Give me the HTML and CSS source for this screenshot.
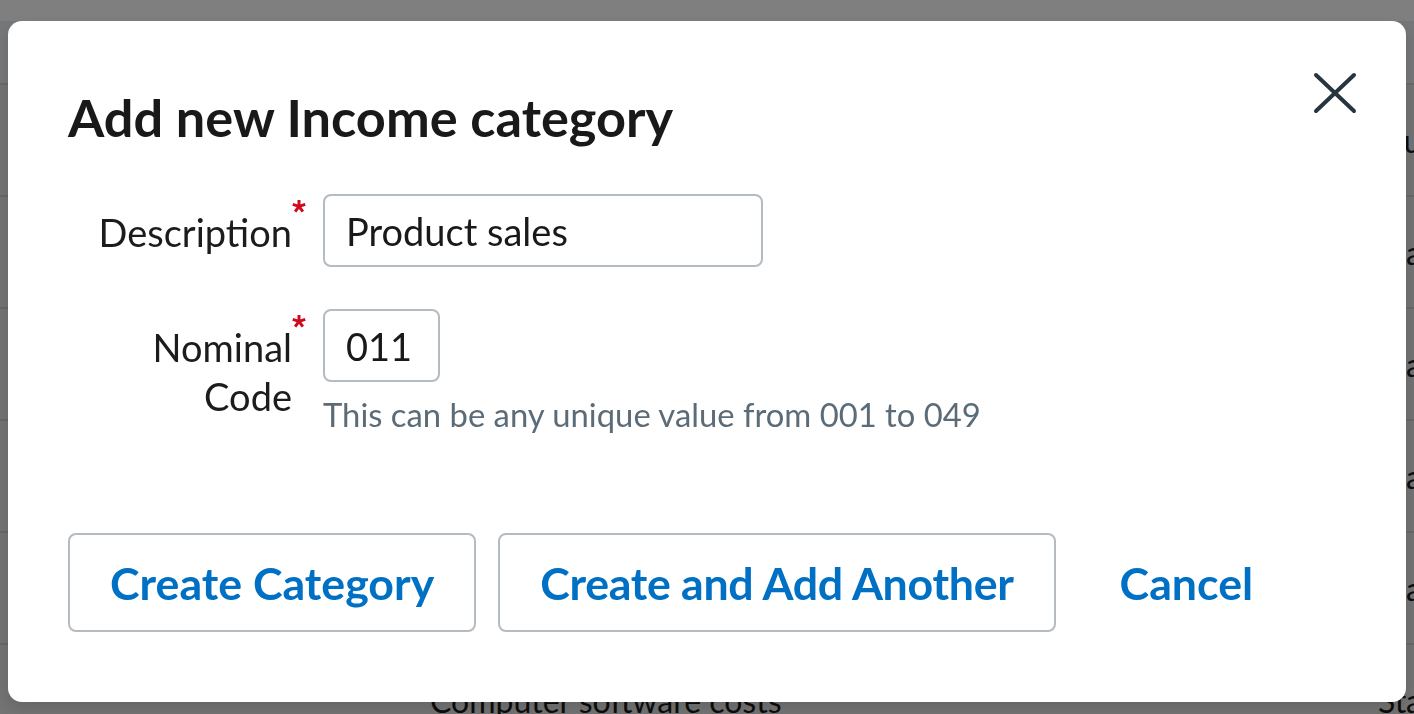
FILE: index.html
```html
<!DOCTYPE html>
<html lang="en">
<head>
<meta charset="utf-8">
<title>Add new Income category</title>
<link rel="stylesheet" href="styles.css">
</head>
<body>
<div class="page">
  <div class="topbar"></div>
  <div class="thead"></div>
  <div class="trow"><span class="cell-name"></span><span class="cell-rate">Outside scope</span></div>
  <div class="trow"><span class="cell-name"></span><span class="cell-rate">Standard 20%</span></div>
  <div class="trow"><span class="cell-name"></span><span class="cell-rate">Standard 20%</span></div>
  <div class="trow"><span class="cell-name"></span><span class="cell-rate">Standard 20%</span></div>
  <div class="trow"><span class="cell-name"></span><span class="cell-rate">Standard 20%</span></div>
  <div class="trow"><span class="cell-name">Computer software costs</span><span class="cell-rate">Standard 20%</span></div>
</div>
<div class="overlay"></div>
<div class="modal" role="dialog" aria-labelledby="modal-title">
  <button class="close" type="button" aria-label="Close">
    <svg class="close-icon" viewBox="0 0 44 42" width="44" height="42" aria-hidden="true">
      <line x1="3" y1="3" x2="41" y2="39"/>
      <line x1="41" y1="3" x2="3" y2="39"/>
    </svg>
  </button>
  <h1 class="title" id="modal-title">Add new Income category</h1>
  <form class="form">
    <div class="field">
      <label class="label" for="desc">
        <span class="label-text">Description</span>
        <svg class="req" viewBox="0 0 16 16" width="14" height="16" aria-hidden="true">
          <path d="M8 8.5V1M8 8.5L15.13 6.18M8 8.5L12.41 14.57M8 8.5L3.59 14.57M8 8.5L0.87 6.18"/>
        </svg>
      </label>
      <div class="control">
        <input class="input input-desc" id="desc" type="text" value="Product sales">
      </div>
    </div>
    <div class="field field-code">
      <label class="label" for="code">
        <span class="label-text">Nominal<br>Code</span>
        <svg class="req" viewBox="0 0 16 16" width="14" height="16" aria-hidden="true">
          <path d="M8 8.5V1M8 8.5L15.13 6.18M8 8.5L12.41 14.57M8 8.5L3.59 14.57M8 8.5L0.87 6.18"/>
        </svg>
      </label>
      <div class="control">
        <input class="input input-code" id="code" type="text" value="011">
        <p class="hint">This can be any unique value from 001 to 049</p>
      </div>
    </div>
    <div class="actions">
      <button class="btn" type="button">Create Category</button>
      <button class="btn btn-long" type="button">Create and Add Another</button>
      <button class="btn btn-link" type="button">Cancel</button>
    </div>
  </form>
</div>
</body>
</html>
```
FILE: styles.css
```css
* { box-sizing: border-box; }

html, body {
  margin: 0;
  padding: 0;
  width: 1414px;
  height: 714px;
  overflow: hidden;
  font-family: Lato, "Noto Sans", sans-serif;
  background: #ffffff;
}

/* background page */
.page {
  width: 1414px;
  height: 714px;
  overflow: hidden;
}
.topbar {
  height: 21px;
  background: #ffffff;
}
.thead {
  height: 64px;
  background: #ebeef1;
  border-bottom: 2px solid #d2d4d6;
}
.trow {
  height: 112px;
  display: flex;
  align-items: center;
  padding-left: 430px;
  background: #e7e7e7;
  border-bottom: 2px solid #d0d0d0;
  font-size: 32px;
  color: #1a1a1a;
  white-space: nowrap;
  overflow: hidden;
}
.cell-name {
  width: 948px;
  flex: none;
}
.cell-rate {
  flex: none;
}

.overlay {
  position: fixed;
  inset: 0;
  background: rgba(0, 0, 0, 0.5);
}

/* modal */
.modal {
  position: absolute;
  top: 21px;
  left: 8px;
  width: 1398px;
  height: 681px;
  padding: 66px 60px 0 60px;
  background: #ffffff;
  border-radius: 14px;
  box-shadow: 0 6px 14px rgba(0, 0, 0, 0.12);
}

.close {
  position: absolute;
  top: 51px;
  left: 1305px;
  width: 44px;
  height: 42px;
  padding: 0;
  border: 0;
  background: transparent;
  cursor: pointer;
}
.close-icon {
  display: block;
  stroke: #27353f;
  stroke-width: 4;
  stroke-linecap: round;
}

.title {
  margin: 0;
  font-size: 52.3px;
  line-height: 60px;
  font-weight: 700;
  color: #191919;
}

.form {
  margin: 47px 0 0 0;
}

.field {
  display: grid;
  grid-template-columns: 238px auto;
  column-gap: 17px;
  align-items: start;
}
.field-code {
  margin-top: 42px;
}

.label {
  display: flex;
  justify-content: flex-end;
  align-items: flex-start;
}
.label-text {
  padding-top: 14px;
  font-size: 38px;
  line-height: 49px;
  color: #1c1c1c;
  text-align: right;
}
.req {
  flex: none;
  margin-top: 4px;
  fill: none;
  stroke: #cf0a1c;
  stroke-width: 3.4;
}

.control {
  display: flex;
  flex-direction: column;
  align-items: flex-start;
}

.input {
  height: 73px;
  padding: 0 21px;
  border: 2px solid #b4bbc1;
  border-radius: 8px;
  font-family: Lato, "Noto Sans", sans-serif;
  font-size: 38px;
  color: #191919;
  background: #ffffff;
  outline: none;
}
.input-desc { width: 440px; }
.input-code { width: 117px; }

.hint {
  margin: 13px 0 0 0;
  font-size: 32.8px;
  line-height: 40px;
  color: #5b6c78;
  white-space: nowrap;
}

.actions {
  display: flex;
  gap: 22px;
  margin-top: 98px;
}

.btn {
  height: 99px;
  padding: 0 40px;
  border: 2px solid #b4bbc1;
  border-radius: 8px;
  background: #ffffff;
  font-family: Lato, "Noto Sans", sans-serif;
  font-size: 44.7px;
  font-weight: 700;
  color: #0070c4;
  white-space: nowrap;
  cursor: pointer;
}
.btn-long {
  letter-spacing: -0.3px;
}
.btn-link {
  border-color: transparent;
}
```
